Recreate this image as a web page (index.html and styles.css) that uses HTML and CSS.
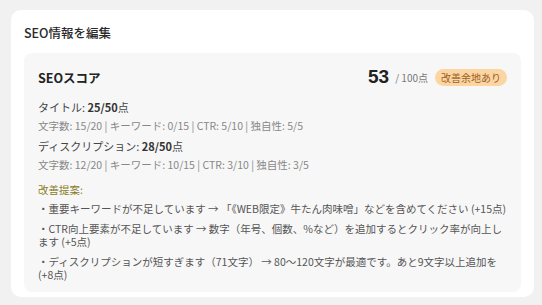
FILE: index.html
```html
<!DOCTYPE html>
<html lang="ja">
<head>
<meta charset="UTF-8">
<title>SEO情報を編集</title>
<link rel="stylesheet" href="styles.css">
</head>
<body>
<div class="panel">
  <h2 class="panel-title">SEO情報を編集</h2>
  <div class="score-box">
    <div class="score-head">
      <span class="score-label">SEOスコア</span>
      <div class="score-value">
        <span class="score-num">53</span>
        <span class="score-max">/ 100点</span>
        <span class="badge">改善余地あり</span>
      </div>
    </div>

    <div class="item">
      <div class="item-title">タイトル: <b>25/50</b>点</div>
      <div class="item-detail">文字数: 15/20 | キーワード: 0/15 | CTR: 5/10 | 独自性: 5/5</div>
    </div>
    <div class="item">
      <div class="item-title">ディスクリプション: <b>28/50</b>点</div>
      <div class="item-detail">文字数: 12/20 | キーワード: 10/15 | CTR: 3/10 | 独自性: 3/5</div>
    </div>

    <div class="suggest-title">改善提案:</div>
    <ul class="suggest-list">
      <li>・重要キーワードが不足しています → 「《WEB限定》牛たん肉味噌」などを含めてください (+15点)</li>
      <li>・CTR向上要素が不足しています → 数字（年号、個数、%など）を追加するとクリック率が向上します (+5点)</li>
      <li>・ディスクリプションが短すぎます（71文字） → 80〜120文字が最適です。あと9文字以上追加を (+8点)</li>
    </ul>
  </div>
</div>
</body>
</html>
```

FILE: styles.css
```css
body {
  margin: 0;
  padding: 10px 8px 0 11px;
  background: #f1f1f1;
  font-family: "Noto Sans CJK JP", "Noto Sans", sans-serif;
  color: #333;
}

.panel {
  background: #fff;
  border-radius: 10px;
  padding: 14px 13px 5px 13px;
}

.panel-title {
  margin: 0 0 11px 0;
  font-size: 12.5px;
  font-weight: 500;
  line-height: 18px;
  color: #2a2a2a;
}

.score-box {
  background: #f7f7f7;
  border-radius: 8px;
  padding: 12px 14px 11px 14px;
}

.score-head {
  display: flex;
  justify-content: space-between;
  align-items: center;
  height: 24px;
  margin-bottom: 10px;
}

.score-label {
  font-size: 12.5px;
  font-weight: 700;
  color: #222;
}

.score-value {
  display: flex;
  align-items: center;
}

.score-num {
  font-family: "Liberation Sans", Arial, sans-serif;
  font-size: 19px;
  font-weight: 700;
  color: #222;
  margin-right: 6px;
}

.score-max {
  font-size: 10px;
  color: #777;
  margin-right: 7px;
}

.badge {
  background: #fbd5a2;
  color: #9b5f26;
  font-size: 10px;
  line-height: 17px;
  padding: 0 6px;
  border-radius: 9px;
}

.item {
  margin-bottom: 3px;
}

.item-title {
  font-size: 11px;
  line-height: 17px;
  color: #444;
}

.item-title b {
  font-weight: 700;
  color: #333;
}

.item-detail {
  font-size: 10.5px;
  line-height: 19px;
  color: #888;
}

.suggest-title {
  margin-top: 8px;
  font-size: 10.5px;
  line-height: 16px;
  color: #8a7d27;
}

.suggest-list {
  list-style: none;
  margin: 4px 0 0 0;
  padding: 0;
}

.suggest-list li {
  font-size: 10.5px;
  line-height: 13px;
  color: #555;
  margin-bottom: 7px;
}

.suggest-list li:last-child {
  margin-bottom: 0;
}
```
